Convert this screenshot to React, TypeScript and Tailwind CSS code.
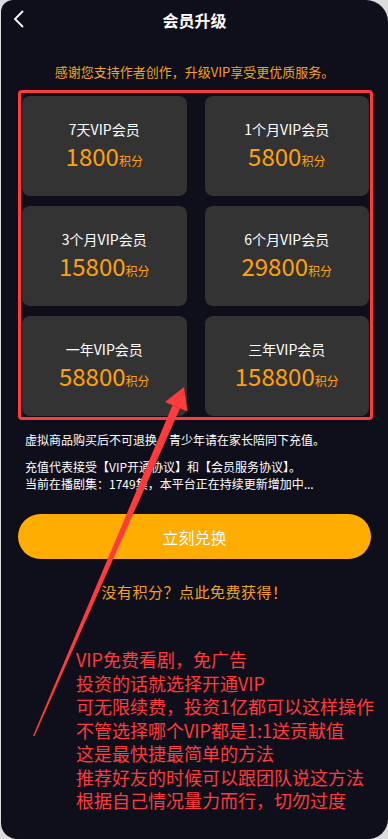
import React from "react";

const plans = [
  { name: "7天VIP会员", price: "1800" },
  { name: "1个月VIP会员", price: "5800" },
  { name: "3个月VIP会员", price: "15800" },
  { name: "6个月VIP会员", price: "29800" },
  { name: "一年VIP会员", price: "58800" },
  { name: "三年VIP会员", price: "158800" },
];

const notes = [
  "VIP免费看剧，免广告",
  "投资的话就选择开通VIP",
  "可无限续费，投资1亿都可以这样操作",
  "不管选择哪个VIP都是1:1送贡献值",
  "这是最快捷最简单的方法",
  "推荐好友的时候可以跟团队说这方法",
  "根据自己情况量力而行，切勿过度",
];

const font = { fontFamily: '"Noto Sans CJK SC", "Noto Sans", sans-serif' };

// the red arrow someone drew over the screenshot
const Arrow = () => (
  <svg className="pointer-events-none absolute left-0 top-0" width="388" height="839" viewBox="0 0 388 839">
    <polygon points="32,736 171.6,405 179,408.5 33.5,736" fill="#ff3b3b" />
    <polygon points="183,387 164,402 186.5,411.5" fill="#ff3b3b" />
  </svg>
);

export default function App() {
  return (
    <div className="h-[839px] w-[388px] bg-[#dcdcdc] pl-px" style={font}>
      <div className="relative h-full overflow-hidden rounded-tl-[12px] rounded-tr-[22px] rounded-bl-[16px] rounded-br-[20px] bg-[#0f0e1b]">
        {/* header */}
        <div className="relative flex h-10 items-center justify-center">
          <svg className="absolute left-[11px] top-[9px]" width="14" height="20" viewBox="0 0 14 20">
            <path d="M11 2 L3 10 L11 18" fill="none" stroke="#ffffff" strokeWidth="1.8" />
          </svg>
          <span className="text-[16px] font-bold text-white">会员升级</span>
        </div>

        <p className="mt-[23px] text-center text-[13px] leading-[18px] text-[#f3a21c]">
          感谢您支持作者创作，升级VIP享受更优质服务。
        </p>

        {/* plans */}
        <div className="ml-[17px] mt-[9px] w-[355px] rounded-[4px] border-[3px] border-[#ff3b3b] px-px pb-px pt-[3px]">
          <div className="grid grid-cols-2 gap-x-[18px] gap-y-[10px]">
            {plans.map((p) => (
              <div key={p.name} className="flex h-[100px] flex-col items-center justify-center rounded-[8px] bg-[#333333] pb-[3px]">
                <div className="text-[14px] leading-[18px] text-white">{p.name}</div>
                <div className="mt-[4px] flex items-baseline text-[#ffa10a]">
                  <span className="text-[24px] leading-[28px]">{p.price}</span>
                  <span className="text-[12px]">积分</span>
                </div>
              </div>
            ))}
          </div>
        </div>

        <div className="ml-[24px] mt-[11px] text-[12px] leading-[17px] text-white">
          <p>虚拟商品购买后不可退换，青少年请在家长陪同下充值。</p>
          <p className="mt-[10px]">充值代表接受【VIP开通协议】和【会员服务协议】。</p>
          <p>当前在播剧集：1749集，本平台正在持续更新增加中...</p>
        </div>

        <button className="ml-[17px] mt-[22px] flex h-[45px] w-[353px] items-center justify-center rounded-full bg-[#ffad01] text-[16px] text-white">
          立刻兑换
        </button>

        <p className="mt-[23px] text-center text-[15px] leading-[20px] tracking-[0.5px] text-[#f3a21c]">
          没有积分？点此免费获得！
        </p>

        <div className="ml-[75px] mt-[46px] text-[18px] leading-[23.5px] text-[#ff3b3b]">
          {notes.map((n) => (
            <p key={n}>{n}</p>
          ))}
        </div>

        <Arrow />
      </div>
    </div>
  );
}
